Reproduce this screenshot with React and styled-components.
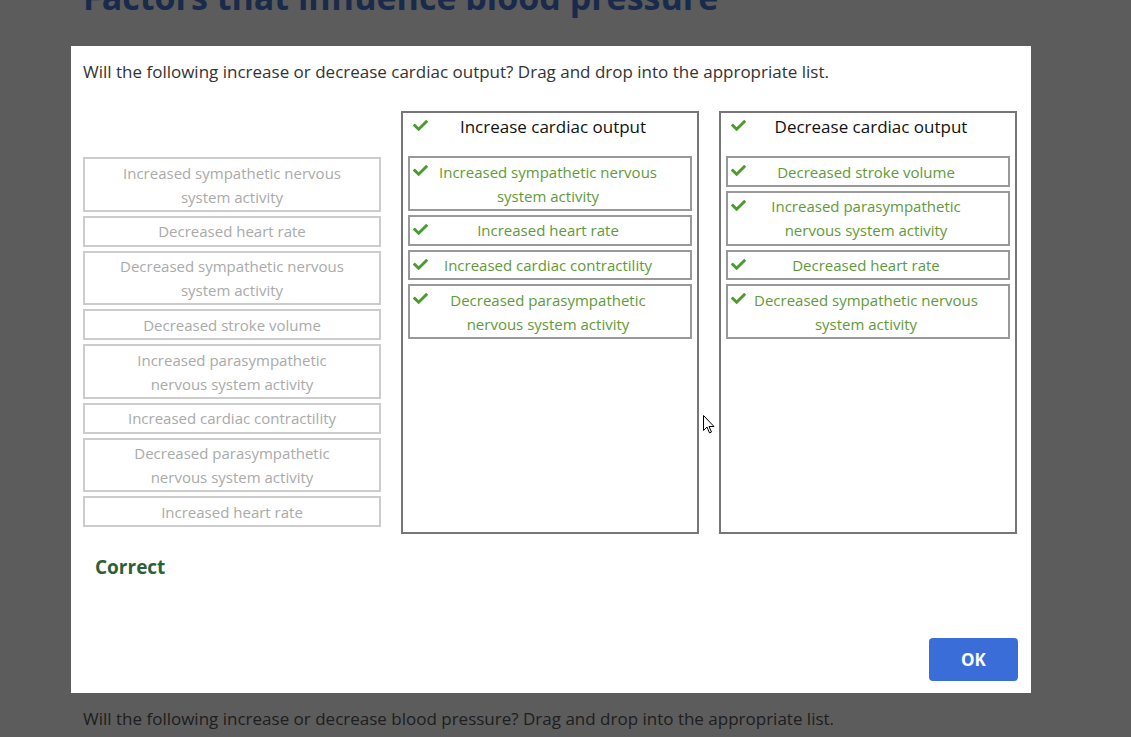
import React from "react"
import styled, { createGlobalStyle } from "styled-components"
import { FaCheck } from "react-icons/fa"

const GlobalStyle = createGlobalStyle`
  html, body {
    margin: 0;
    padding: 0;
    background: #ffffff;
    font-family: "Open Sans", "Liberation Sans", sans-serif;
  }
  html {
    overflow: hidden;
  }
  * {
    box-sizing: border-box;
  }
`

const Page = styled.div`
  padding: 1px 83px 0;
`

const PageTitle = styled.h1`
  margin: -24px 0 0;
  font-size: 34px;
  line-height: 41px;
  font-weight: 700;
  color: #4a74cc;
  white-space: nowrap;
`

const HiddenActivity = styled.div`
  height: 689px;
`

const PageText = styled.p`
  margin: 0;
  font-size: 17px;
  line-height: 24px;
  color: #555555;
`

const Overlay = styled.div`
  position: fixed;
  inset: 0;
  background: rgba(0, 0, 0, 0.64);
`

const Modal = styled.div`
  position: fixed;
  left: 71px;
  top: 46px;
  width: 960px;
  height: 647px;
  background: #ffffff;
  display: flex;
  flex-direction: column;
  padding: 14px 13px 12px 12px;
`

const Question = styled.p`
  margin: 0;
  font-size: 17px;
  line-height: 24px;
  color: #333333;
`

const Columns = styled.div`
  display: flex;
  gap: 20px;
  margin-top: 27px;
`

const Source = styled.div`
  width: 298px;
  padding-top: 46px;
  display: flex;
  flex-direction: column;
  gap: 4px;
`

const Target = styled.div`
  width: 298px;
  height: 423px;
  border: 2px solid #767676;
  padding: 0 5px 5px;
  display: flex;
  flex-direction: column;
`

const TargetHeader = styled.div`
  position: relative;
  height: 43px;
  padding: 3px 0 0 6px;
  text-align: center;
  font-size: 17px;
  line-height: 22px;
  color: #111111;
`

const List = styled.div`
  display: flex;
  flex-direction: column;
  gap: 4px;
`

const Item = styled.div`
  position: relative;
  border: 2px solid ${(p) => (p.$placed ? "#999999" : "#cccccc")};
  padding: ${(p) => (p.$placed ? "1.5px 10px 1.25px 6px" : "1.5px 6px 1.25px")};
  text-align: center;
  font-size: 15px;
  line-height: 24px;
  color: ${(p) => (p.$placed ? "#619a3a" : "#aaaaaa")};
`

const Tick = styled(FaCheck)`
  position: absolute;
  left: ${(p) => p.$left}px;
  top: ${(p) => p.$top}px;
  width: 15px;
  height: 15px;
  color: #4b9a32;
`

const Feedback = styled.div`
  margin-top: 20px;
  padding-left: 12px;
  font-size: 19px;
  line-height: 26px;
  font-weight: 700;
  color: #2d6038;
`

const OkButton = styled.button`
  margin-top: auto;
  align-self: flex-end;
  width: 89px;
  height: 43px;
  border: none;
  border-radius: 4px;
  background: #3a6dd8;
  color: #ffffff;
  font-family: "Open Sans", "Liberation Sans", sans-serif;
  font-size: 17px;
  font-weight: 700;
`

const Pointer = styled.svg`
  position: fixed;
  left: 703px;
  top: 415px;
`

const sourceItems = [
  "Increased sympathetic nervous system activity",
  "Decreased heart rate",
  "Decreased sympathetic nervous system activity",
  "Decreased stroke volume",
  "Increased parasympathetic nervous system activity",
  "Increased cardiac contractility",
  "Decreased parasympathetic nervous system activity",
  "Increased heart rate",
]

const targets = [
  {
    title: "Increase cardiac output",
    items: [
      "Increased sympathetic nervous system activity",
      "Increased heart rate",
      "Increased cardiac contractility",
      "Decreased parasympathetic nervous system activity",
    ],
  },
  {
    title: "Decrease cardiac output",
    items: [
      "Decreased stroke volume",
      "Increased parasympathetic nervous system activity",
      "Decreased heart rate",
      "Decreased sympathetic nervous system activity",
    ],
  },
]

// two-line items break like the original
const breaks = {
  "Increased sympathetic nervous system activity": ["Increased sympathetic nervous", "system activity"],
  "Decreased sympathetic nervous system activity": ["Decreased sympathetic nervous", "system activity"],
  "Increased parasympathetic nervous system activity": ["Increased parasympathetic", "nervous system activity"],
  "Decreased parasympathetic nervous system activity": ["Decreased parasympathetic", "nervous system activity"],
}

function wrap(text) {
  const lines = breaks[text]
  if (!lines) return text
  return (
    <>
      {lines[0]}
      <br />
      {lines[1]}
    </>
  )
}

function App() {
  return (
    <>
      <GlobalStyle />
      <Page>
        <PageTitle>Factors that influence blood pressure</PageTitle>
        <HiddenActivity />
        <PageText>
          Will the following increase or decrease blood pressure? Drag and drop into the appropriate list.
        </PageText>
      </Page>
      <Overlay />
      <Modal>
        <Question>
          Will the following increase or decrease cardiac output? Drag and drop into the appropriate list.
        </Question>
        <Columns>
          <Source>
            {sourceItems.map((text) => (
              <Item key={text}>{wrap(text)}</Item>
            ))}
          </Source>
          {targets.map((t) => (
            <Target key={t.title}>
              <TargetHeader>
                <Tick $left={5} $top={5} />
                {t.title}
              </TargetHeader>
              <List>
                {t.items.map((text) => (
                  <Item key={text} $placed>
                    <Tick $left={3} $top={5} />
                    {wrap(text)}
                  </Item>
                ))}
              </List>
            </Target>
          ))}
        </Columns>
        <Feedback>Correct</Feedback>
        <OkButton>OK</OkButton>
      </Modal>
      <Pointer width="12" height="19" viewBox="0 0 12 19">
        <path
          d="M0.5 0.5 L0.5 15.5 L4 12 L6.5 18 L8.5 17 L6 11.5 L11 11.5 Z"
          fill="#ffffff"
          stroke="#000000"
          strokeWidth="1"
          strokeLinejoin="miter"
        />
      </Pointer>
    </>
  )
}

export default App
